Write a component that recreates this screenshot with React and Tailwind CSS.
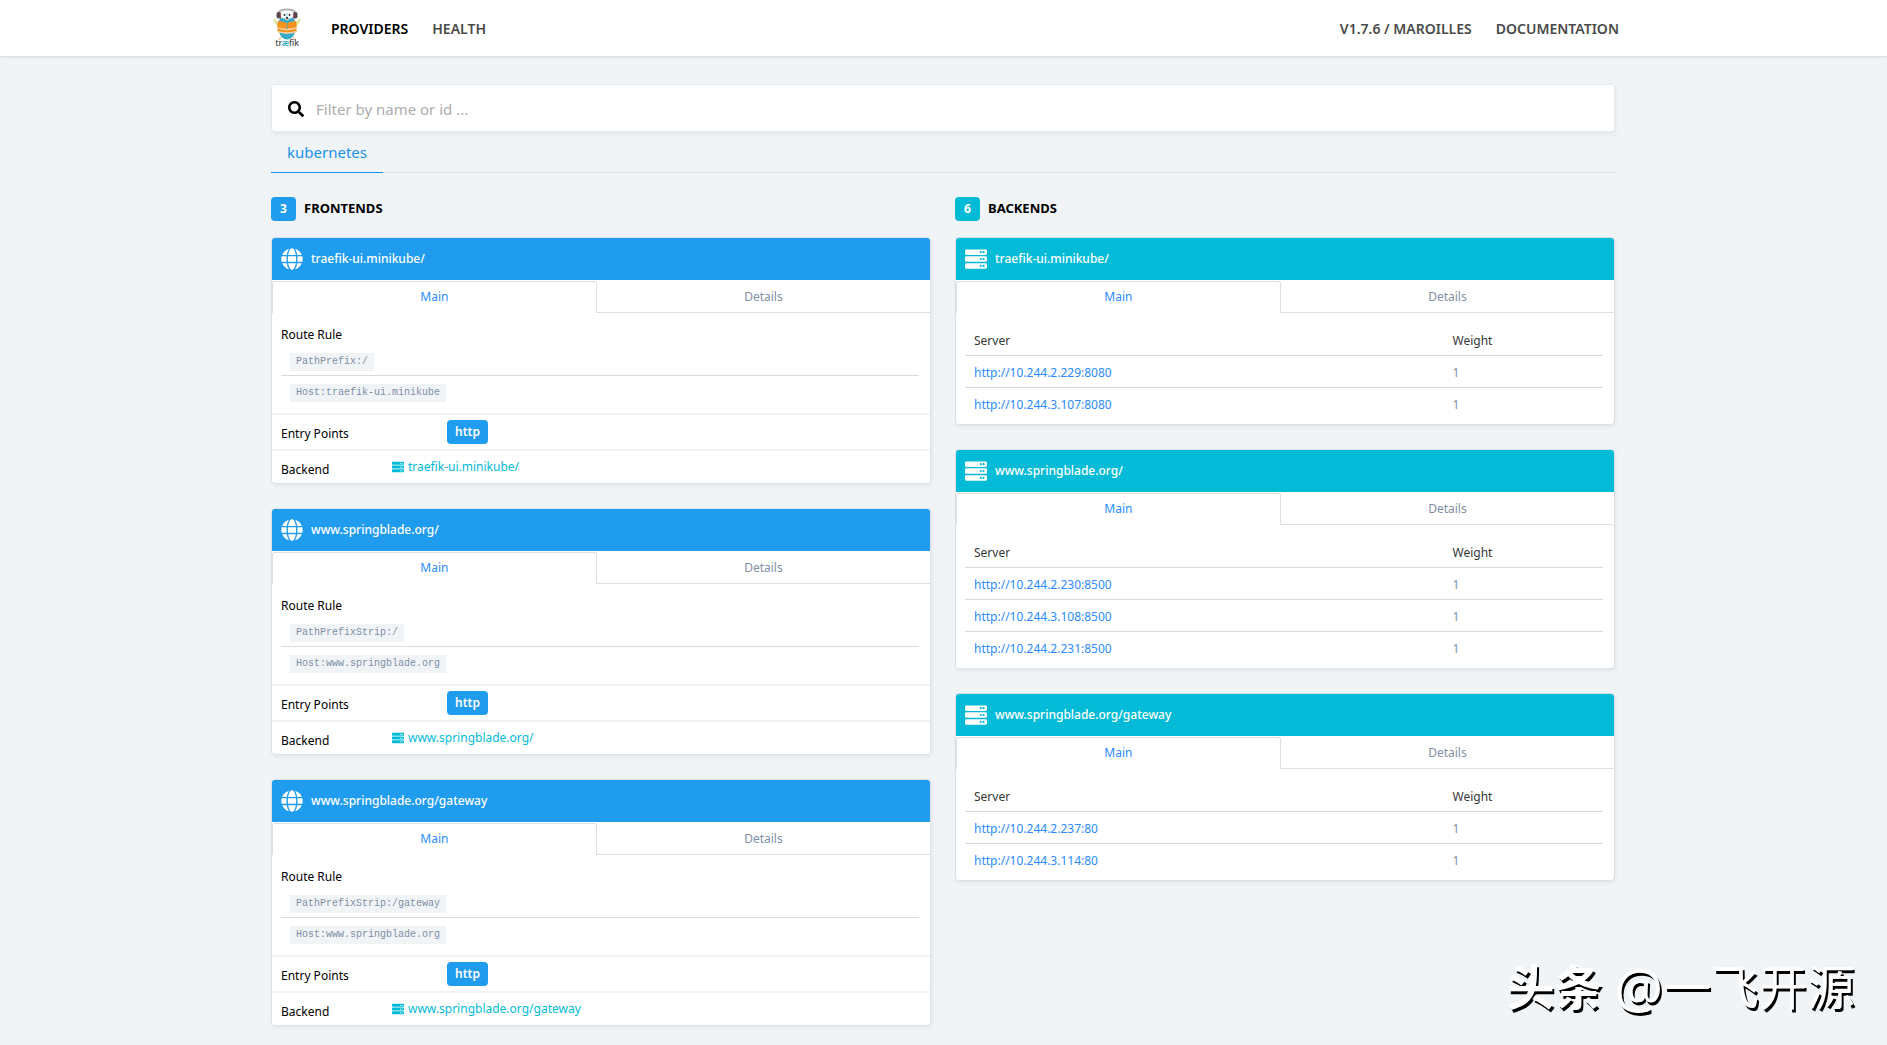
import { FaGlobe, FaSearch, FaServer } from "react-icons/fa";

const frontends = [
  { name: "traefik-ui.minikube/", rules: ["PathPrefix:/", "Host:traefik-ui.minikube"] },
  { name: "www.springblade.org/", rules: ["PathPrefixStrip:/", "Host:www.springblade.org"] },
  { name: "www.springblade.org/gateway", rules: ["PathPrefixStrip:/gateway", "Host:www.springblade.org"] },
];

const backends = [
  { name: "traefik-ui.minikube/", servers: ["http://10.244.2.229:8080", "http://10.244.3.107:8080"] },
  {
    name: "www.springblade.org/",
    servers: ["http://10.244.2.230:8500", "http://10.244.3.108:8500", "http://10.244.2.231:8500"],
  },
  { name: "www.springblade.org/gateway", servers: ["http://10.244.2.237:80", "http://10.244.3.114:80"] },
];

function Logo() {
  return (
    <svg width="28" height="40" viewBox="0 0 28 40" role="img" aria-label="traefik">
      <path d="M1 11l5 9M27 11l-5 9" stroke="#c9dc4a" strokeWidth="1.2" />
      <path d="M8 29l-2 3M20 29l2 3" stroke="#f3c9a0" strokeWidth="1.5" />
      <ellipse cx="14" cy="18.5" rx="9" ry="13" fill="#37abc8" />
      <path d="M5 6C6 0 22 0 23 6" fill="none" stroke="#b5b5b5" strokeWidth="1.8" />
      <rect x="3.5" y="4" width="4.5" height="6.5" rx="2" fill="#5a4a4c" />
      <rect x="20" y="4" width="4.5" height="6.5" rx="2" fill="#5a4a4c" />
      <path d="M7.5 6v4M20.5 6v4" stroke="#c0303a" strokeWidth="1" />
      <circle cx="10.8" cy="7.5" r="3" fill="#fff" />
      <circle cx="17.2" cy="7.5" r="3" fill="#fff" />
      <circle cx="11.5" cy="7" r="0.9" fill="#222" />
      <circle cx="16.5" cy="7" r="0.9" fill="#222" />
      <ellipse cx="14" cy="11" rx="2" ry="1.3" fill="#e8d8c8" />
      <circle cx="14" cy="10" r="1" fill="#222" />
      <path d="M4.5 13q4.500 0 9.500 2q5-2 9.500-2v11q-9.500 3-19 0z" fill="#f7931e" />
      <path d="M5 20q9 3 18 0M5 23.500q9 3 18 0" fill="none" stroke="#f8dcb8" strokeWidth="1.3" />
      <path d="M14 15v6" stroke="#37abc8" strokeWidth="0.8" />
      <text x="14" y="38" textAnchor="middle" fontSize="8" fontFamily="Noto Sans, sans-serif" fill="#555">
        tr<tspan fill="#37abc8">æ</tspan>fik
      </text>
    </svg>
  );
}

function Tabs() {
  return (
    <div className="flex h-[33px] pt-px text-xs leading-5 text-[#7f8fa4]">
      <button
        type="button"
        className="flex-auto rounded-t-[3px] border border-b-0 border-[#dbdfe3] px-4 pb-0.5 text-[#2b8cff]"
      >
        Main
      </button>
      <button type="button" className="flex-auto border-b border-[#dbdfe3] px-4">
        Details
      </button>
    </div>
  );
}

function Card({ name, icon: Icon, color, children }) {
  return (
    <article className="overflow-hidden rounded-[4px] border border-[#dde1e5] bg-white shadow-[1px_2px_4px_rgba(0,0,0,0.06)]">
      <h3 className={`flex h-[42px] items-center gap-2 px-[9px] text-xs font-medium text-white ${color}`}>
        <Icon size={22} />
        {name}
      </h3>
      <Tabs />
      {children}
    </article>
  );
}

function Frontend({ name, rules }) {
  return (
    <Card name={name} icon={FaGlobe} color="bg-[#209cee]">
      <div className="h-[100px] pt-3 pr-[11px] pl-[9px]">
        <div className="text-xs leading-5 text-black">Route Rule</div>
        {rules.map((rule) => (
          <div key={rule} className="flex border-b border-[#dbdbdb] px-[9px] pt-2 pb-1 last:border-0">
            <code className="bg-[#f1f4f7] px-1.5 font-['Liberation_Mono',monospace] text-[10px] leading-[18px] text-[#7f8fa4]">
              {rule}
            </code>
          </div>
        ))}
      </div>
      <div className="flex h-9 items-center border-t-2 border-[#f1f4f7] px-[9px]">
        <div className="w-[166px] pt-1 text-xs leading-5 text-black">Entry Points</div>
        <span className="rounded-[4px] bg-[#209cee] px-2 text-xs leading-6 font-semibold text-white">http</span>
      </div>
      <div className="flex h-[34px] border-t-2 border-[#f1f4f7] px-[9px]">
        <div className="w-[111px] pt-[9px] text-xs leading-5 text-black">Backend</div>
        <a href="#backend" className="flex items-center gap-1 text-xs leading-5 text-[#03bbd7]">
          <FaServer size={12} />
          {name}
        </a>
      </div>
    </Card>
  );
}

function Backend({ name, servers }) {
  return (
    <Card name={name} icon={FaServer} color="bg-[#04bbd7]">
      <div className="pt-[11px] pr-[11px] pb-[5px] pl-[9px]">
        <table className="w-full table-fixed text-xs leading-5">
          <thead>
            <tr className="h-[31px] border-b border-[#dbdbdb] text-left text-[#363636]">
              <th className="w-3/4 px-[9px] pt-1 font-normal">Server</th>
              <th className="px-[9px] pt-1 font-normal">Weight</th>
            </tr>
          </thead>
          <tbody>
            {servers.map((server) => (
              <tr key={server} className="h-8 border-b border-[#dbdbdb] last:border-0">
                <td className="px-[9px] pt-1">
                  <a href={server} className="text-[#2b8cff]">{server}</a>
                </td>
                <td className="px-[9px] pt-1 text-[#7f8fa4]">1</td>
              </tr>
            ))}
          </tbody>
        </table>
      </div>
    </Card>
  );
}

function Column({ title, count, color, children }) {
  return (
    <section>
      <h2 className="mb-4 flex h-6 items-center gap-2 text-[13px] font-bold text-black">
        <span className={`w-[25px] rounded-[4px] text-center text-xs leading-6 text-white ${color}`}>{count}</span>
        {title}
      </h2>
      <div className="grid gap-6">{children}</div>
    </section>
  );
}

function App() {
  return (
    <div className="min-h-screen bg-[#f0f4f7] pb-5 font-['Noto_Sans','Noto_Sans_CJK_SC',sans-serif]">
      <header className="border-b border-[#dcdfe3] bg-white pr-px shadow-[0_1px_3px_rgba(0,0,0,0.06)]">
        <nav className="mx-auto flex h-14 max-w-[1344px] items-center text-sm font-semibold text-[#4a4a4a]">
          <a href="#home" className="mr-[30px] ml-0.5">
            <Logo />
          </a>
          <a href="#providers" className="mr-6 pt-0.5 text-black">PROVIDERS</a>
          <a href="#health" className="pt-0.5">HEALTH</a>
          <a href="#version" className="mr-6 ml-auto pt-0.5">V1.7.6 / MAROILLES</a>
          <a href="#documentation" className="-mr-1 pt-0.5">DOCUMENTATION</a>
        </nav>
      </header>

      <main className="pt-[27px] pr-px">
        <div className="mx-auto max-w-[1344px]">
          <label className="flex h-12 items-center gap-3 rounded-[4px] border border-[#e6eaed] bg-white px-4 pt-0.5 shadow-[1px_2px_4px_rgba(0,0,0,0.06)]">
            <FaSearch size={16} className="text-black" />
            <input
              type="text"
              aria-label="Filter"
              placeholder="Filter by name or id ..."
              className="flex-1 text-[15px] outline-none placeholder:text-[#adadad]"
            />
          </label>
          <div className="flex border-b border-[#dbdfe3]">
            <button type="button" className="-mb-px h-[41px] border-b border-[#1991eb] px-4 text-[15px] text-[#1991eb]">
              kubernetes
            </button>
          </div>

          <div className="mt-6 grid grid-cols-2 items-start gap-6">
            <Column title="FRONTENDS" count={3} color="bg-[#209cee]">
              {frontends.map((item) => (
                <Frontend key={item.name} {...item} />
              ))}
            </Column>
            <Column title="BACKENDS" count={6} color="bg-[#04bbd7]">
              {backends.map((item) => (
                <Backend key={item.name} {...item} />
              ))}
            </Column>
          </div>
        </div>
      </main>

      <div className="fixed right-8 bottom-[22px] flex items-center gap-3 text-5xl leading-[72px] text-white [text-shadow:2px_3px_0_#000]">
        <span className="font-bold">头条</span>
        <span className="flex items-center">
          <span className="text-[54px]">@</span>
          一飞开源
        </span>
      </div>
    </div>
  );
}

export default App;
